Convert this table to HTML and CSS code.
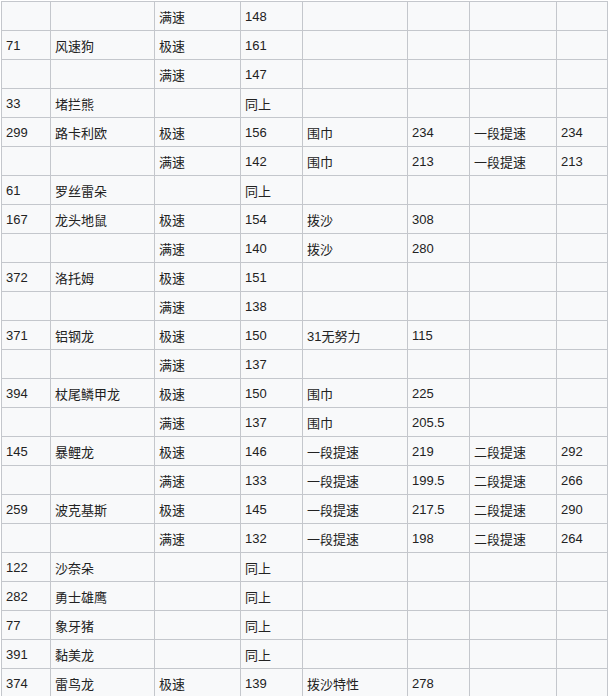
FILE: index.html
```html
<!DOCTYPE html>
<html lang="zh">
<head>
<meta charset="utf-8">
<title>速度表</title>
<link rel="stylesheet" href="styles.css">
</head>
<body>
<div class="table">
  <div class="c"></div><div class="c"></div><div class="c">满速</div><div class="c">148</div><div class="c"></div><div class="c"></div><div class="c"></div><div class="c"></div>
  <div class="c">71</div><div class="c">风速狗</div><div class="c">极速</div><div class="c">161</div><div class="c"></div><div class="c"></div><div class="c"></div><div class="c"></div>
  <div class="c"></div><div class="c"></div><div class="c">满速</div><div class="c">147</div><div class="c"></div><div class="c"></div><div class="c"></div><div class="c"></div>
  <div class="c">33</div><div class="c">堵拦熊</div><div class="c"></div><div class="c">同上</div><div class="c"></div><div class="c"></div><div class="c"></div><div class="c"></div>
  <div class="c">299</div><div class="c">路卡利欧</div><div class="c">极速</div><div class="c">156</div><div class="c">围巾</div><div class="c">234</div><div class="c">一段提速</div><div class="c">234</div>
  <div class="c"></div><div class="c"></div><div class="c">满速</div><div class="c">142</div><div class="c">围巾</div><div class="c">213</div><div class="c">一段提速</div><div class="c">213</div>
  <div class="c">61</div><div class="c">罗丝雷朵</div><div class="c"></div><div class="c">同上</div><div class="c"></div><div class="c"></div><div class="c"></div><div class="c"></div>
  <div class="c">167</div><div class="c">龙头地鼠</div><div class="c">极速</div><div class="c">154</div><div class="c">拨沙</div><div class="c">308</div><div class="c"></div><div class="c"></div>
  <div class="c"></div><div class="c"></div><div class="c">满速</div><div class="c">140</div><div class="c">拨沙</div><div class="c">280</div><div class="c"></div><div class="c"></div>
  <div class="c">372</div><div class="c">洛托姆</div><div class="c">极速</div><div class="c">151</div><div class="c"></div><div class="c"></div><div class="c"></div><div class="c"></div>
  <div class="c"></div><div class="c"></div><div class="c">满速</div><div class="c">138</div><div class="c"></div><div class="c"></div><div class="c"></div><div class="c"></div>
  <div class="c">371</div><div class="c">铝钢龙</div><div class="c">极速</div><div class="c">150</div><div class="c">31无努力</div><div class="c">115</div><div class="c"></div><div class="c"></div>
  <div class="c"></div><div class="c"></div><div class="c">满速</div><div class="c">137</div><div class="c"></div><div class="c"></div><div class="c"></div><div class="c"></div>
  <div class="c">394</div><div class="c">杖尾鳞甲龙</div><div class="c">极速</div><div class="c">150</div><div class="c">围巾</div><div class="c">225</div><div class="c"></div><div class="c"></div>
  <div class="c"></div><div class="c"></div><div class="c">满速</div><div class="c">137</div><div class="c">围巾</div><div class="c">205.5</div><div class="c"></div><div class="c"></div>
  <div class="c">145</div><div class="c">暴鲤龙</div><div class="c">极速</div><div class="c">146</div><div class="c">一段提速</div><div class="c">219</div><div class="c">二段提速</div><div class="c">292</div>
  <div class="c"></div><div class="c"></div><div class="c">满速</div><div class="c">133</div><div class="c">一段提速</div><div class="c">199.5</div><div class="c">二段提速</div><div class="c">266</div>
  <div class="c">259</div><div class="c">波克基斯</div><div class="c">极速</div><div class="c">145</div><div class="c">一段提速</div><div class="c">217.5</div><div class="c">二段提速</div><div class="c">290</div>
  <div class="c"></div><div class="c"></div><div class="c">满速</div><div class="c">132</div><div class="c">一段提速</div><div class="c">198</div><div class="c">二段提速</div><div class="c">264</div>
  <div class="c">122</div><div class="c">沙奈朵</div><div class="c"></div><div class="c">同上</div><div class="c"></div><div class="c"></div><div class="c"></div><div class="c"></div>
  <div class="c">282</div><div class="c">勇士雄鹰</div><div class="c"></div><div class="c">同上</div><div class="c"></div><div class="c"></div><div class="c"></div><div class="c"></div>
  <div class="c">77</div><div class="c">象牙猪</div><div class="c"></div><div class="c">同上</div><div class="c"></div><div class="c"></div><div class="c"></div><div class="c"></div>
  <div class="c">391</div><div class="c">黏美龙</div><div class="c"></div><div class="c">同上</div><div class="c"></div><div class="c"></div><div class="c"></div><div class="c"></div>
  <div class="c">374</div><div class="c">雷鸟龙</div><div class="c">极速</div><div class="c">139</div><div class="c">拨沙特性</div><div class="c">278</div><div class="c"></div><div class="c"></div>
</div>
</body>
</html>
```
FILE: styles.css
```css
html, body {
  margin: 0;
  padding: 0;
  background: #ffffff;
}
body {
  padding: 1px 0 0 1px;
  font-family: "Liberation Sans", "Noto Sans CJK SC", sans-serif;
  font-size: 13px;
  color: #222222;
}
.table {
  display: grid;
  grid-template-columns: 49px 104px 86px 62px 105px 62px 87px 51px;
  grid-auto-rows: 29px;
  width: 607px;
  box-sizing: border-box;
  border-left: 1px solid #c4c7cc;
  border-top: 1px solid #c4c7cc;
  background: #f8f9fa;
}
.c {
  box-sizing: border-box;
  border-right: 1px solid #c4c7cc;
  border-bottom: 1px solid #c4c7cc;
  padding: 0 3px 0 4px;
  display: flex;
  align-items: center;
  white-space: nowrap;
  overflow: hidden;
}
```
